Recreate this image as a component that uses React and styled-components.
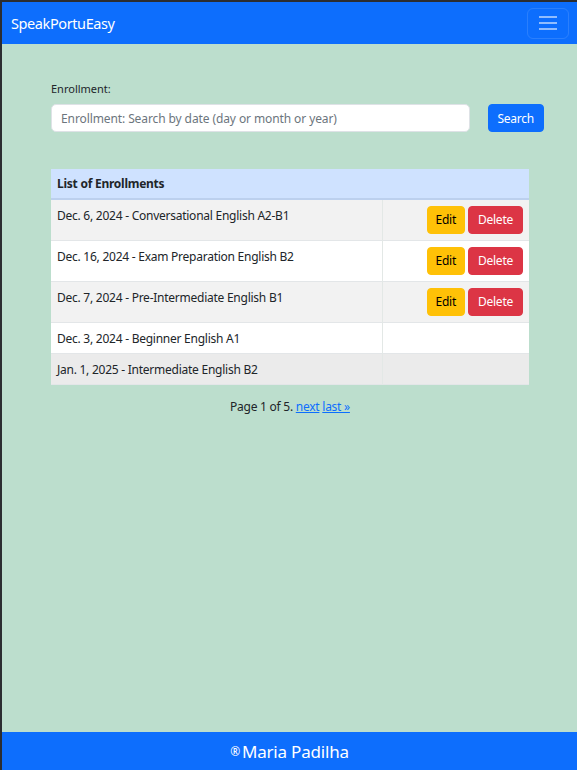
import React from "react";
import styled, { createGlobalStyle } from "styled-components";

const GlobalStyle = createGlobalStyle`
  html, body { margin: 0; padding: 0; }
  body {
    font-family: "Noto Sans", "Open Sans", sans-serif;
    letter-spacing: -0.25px;
    background: #bcdecd;
    color: #212529;
  }
  * { box-sizing: border-box; }
`;

const Page = styled.div`
  min-height: 100vh;
  display: flex;
  flex-direction: column;
  border-top: 2px solid #2b2d31;
  border-left: 2px solid #2b2d31;
`;

const Navbar = styled.nav`
  height: 42px;
  background: #0d6efd;
  display: flex;
  align-items: center;
  justify-content: space-between;
  padding: 0 8px 0 9px;
`;

const Brand = styled.span`
  color: #fff;
  font-size: 14.5px;
  letter-spacing: -0.4px;
`;

const Toggler = styled.button`
  width: 42px;
  height: 31px;
  border: 1px solid rgba(255, 255, 255, 0.12);
  border-radius: 6px;
  background: transparent;
  display: flex;
  flex-direction: column;
  align-items: center;
  justify-content: center;
  gap: 4px;
  padding: 0;
`;

const Bar = styled.span`
  width: 18px;
  height: 2px;
  background: rgba(255, 255, 255, 0.55);
`;

const Main = styled.main`
  flex: 1;
  padding: 37px 33px 0 49px;
`;

const Label = styled.label`
  display: block;
  font-size: 11px;
  letter-spacing: 0;
  margin-bottom: 8px;
`;

const SearchRow = styled.form`
  display: flex;
  gap: 18px;
  align-items: center;
  margin-top: 1px;
`;

const Input = styled.input`
  flex: 1;
  height: 28px;
  border: 1px solid #dee2e6;
  border-radius: 5px;
  padding: 0 9px;
  font: inherit;
  font-size: 12px;
  letter-spacing: -0.1px;
  color: #495057;
  &::placeholder { color: #6c757d; }
`;

const Button = styled.button`
  height: 28px;
  padding: 0 ${(p) => p.$px || 8}px;
  border: 1px solid ${(p) => p.$bg};
  border-radius: 4px;
  background: ${(p) => p.$bg};
  color: ${(p) => p.$fg || "#fff"};
  font: inherit;
  font-size: 12px;
  letter-spacing: -0.25px;
`;

const TableWrap = styled.div`
  margin: 37px 15px 0 0;
`;

const Table = styled.table`
  width: 100%;
  border-collapse: collapse;
  font-size: 12px;
  line-height: 16px;
`;

const Th = styled.th`
  background: #cfe2ff;
  text-align: left;
  font-weight: 700;
  height: 30px;
  padding: 0 6px;
  border-bottom: 2px solid #bcd0ee;
`;

const Tr = styled.tr`
  background: ${(p) => p.$bg};
  border-bottom: 1px solid #e3e6e8;
`;

const Td = styled.td`
  padding: 8px 6px 6px;
  vertical-align: top;
  height: ${(p) => (p.$tall ? 41 : 30)}px;
  ${(p) => p.$actions && "border-left: 1px solid #e3e8e6; width: 147px; text-align: right; padding: 6px 6px 0 0;"}
`;

const Actions = styled.div`
  display: flex;
  justify-content: flex-end;
  gap: 3px;
`;

const Pager = styled.p`
  text-align: center;
  font-size: 12px;
  margin: 13px 15px 0 0;
  a { color: #0d6efd; }
`;

const Footer = styled.footer`
  height: 38px;
  background: #0d6efd;
  color: #fff;
  display: flex;
  align-items: center;
  justify-content: center;
  font-size: 17px;
  letter-spacing: -0.2px;
  sup { font-size: 12px; margin-right: 2px; }
`;

const rows = [
  { text: "Dec. 6, 2024 - Conversational English A2-B1", bg: "#f2f2f2", actions: true },
  { text: "Dec. 16, 2024 - Exam Preparation English B2", bg: "#fff", actions: true },
  { text: "Dec. 7, 2024 - Pre-Intermediate English B1", bg: "#f2f2f2", actions: true },
  { text: "Dec. 3, 2024 - Beginner English A1", bg: "#fff" },
  { text: "Jan. 1, 2025 - Intermediate English B2", bg: "#ebebeb" },
];

export default function App() {
  return (
    <>
      <GlobalStyle />
      <Page>
        <Navbar>
          <Brand>SpeakPortuEasy</Brand>
          <Toggler>
            <Bar />
            <Bar />
            <Bar />
          </Toggler>
        </Navbar>
        <Main>
          <Label>Enrollment:</Label>
          <SearchRow onSubmit={(e) => e.preventDefault()}>
            <Input placeholder="Enrollment: Search by date (day or month or year)" />
            <Button $bg="#0d6efd" $px={9}>Search</Button>
          </SearchRow>
          <TableWrap>
            <Table>
              <thead>
                <tr>
                  <Th colSpan={2}>List of Enrollments</Th>
                </tr>
              </thead>
              <tbody>
                {rows.map((r) => (
                  <Tr key={r.text} $bg={r.bg}>
                    <Td $tall={r.actions}>{r.text}</Td>
                    <Td $actions $tall={r.actions}>
                      {r.actions && (
                        <Actions>
                          <Button $bg="#ffc107" $fg="#000">Edit</Button>
                          <Button $bg="#dc3545" $px={9}>Delete</Button>
                        </Actions>
                      )}
                    </Td>
                  </Tr>
                ))}
              </tbody>
            </Table>
          </TableWrap>
          <Pager>
            Page 1 of 5. <a href="#">next</a> <a href="#">last &raquo;</a>
          </Pager>
        </Main>
        <Footer>
          <sup>®</sup>Maria Padilha
        </Footer>
      </Page>
    </>
  );
}
